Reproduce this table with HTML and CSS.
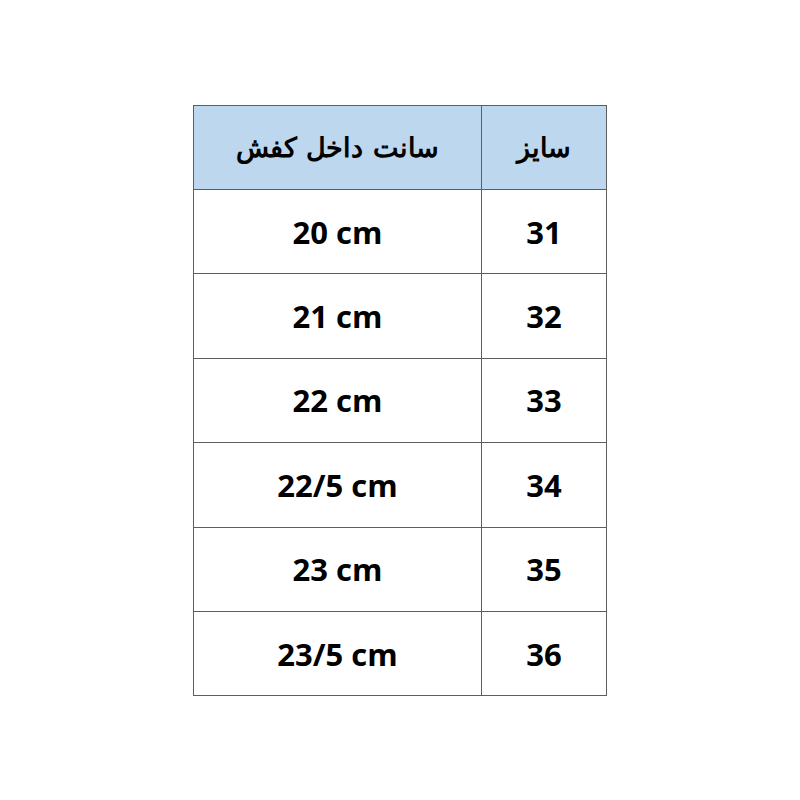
FILE: index.html
```html
<!DOCTYPE html>
<html lang="fa">
<head>
<meta charset="utf-8">
<link rel="stylesheet" href="styles.css">
</head>
<body>
<table class="size-table">
  <thead>
    <tr>
      <th class="col-cm">سانت داخل کفش</th>
      <th class="col-size">سایز</th>
    </tr>
  </thead>
  <tbody>
    <tr><td class="col-cm">20 cm</td><td class="col-size">31</td></tr>
    <tr><td class="col-cm">21 cm</td><td class="col-size">32</td></tr>
    <tr><td class="col-cm">22 cm</td><td class="col-size">33</td></tr>
    <tr><td class="col-cm">22/5 cm</td><td class="col-size">34</td></tr>
    <tr><td class="col-cm">23 cm</td><td class="col-size">35</td></tr>
    <tr><td class="col-cm">23/5 cm</td><td class="col-size">36</td></tr>
  </tbody>
</table>
</body>
</html>
```
FILE: styles.css
```css
html, body {
  margin: 0;
  padding: 0;
  background: #ffffff;
}
body {
  padding-top: 105px;
}
.size-table {
  margin: 0 auto;
  border-collapse: collapse;
  width: 412px;
  table-layout: fixed;
  font-family: "Open Sans", "DejaVu Sans", sans-serif;
  color: #000;
}
.size-table th,
.size-table td {
  border: 1px solid #5e5e5e;
  padding: 0;
  text-align: center;
  vertical-align: middle;
  font-weight: 700;
}
.size-table th {
  height: 83px;
  background: #bdd7ee;
  font-family: "DejaVu Serif", "Liberation Serif", serif;
  font-size: 27px;
  font-weight: 700;
  direction: rtl;
}
.size-table td {
  height: 83.4px;
  font-size: 31px;
}
.col-cm {
  width: 287px;
}
.col-size {
  width: 124px;
}
```
